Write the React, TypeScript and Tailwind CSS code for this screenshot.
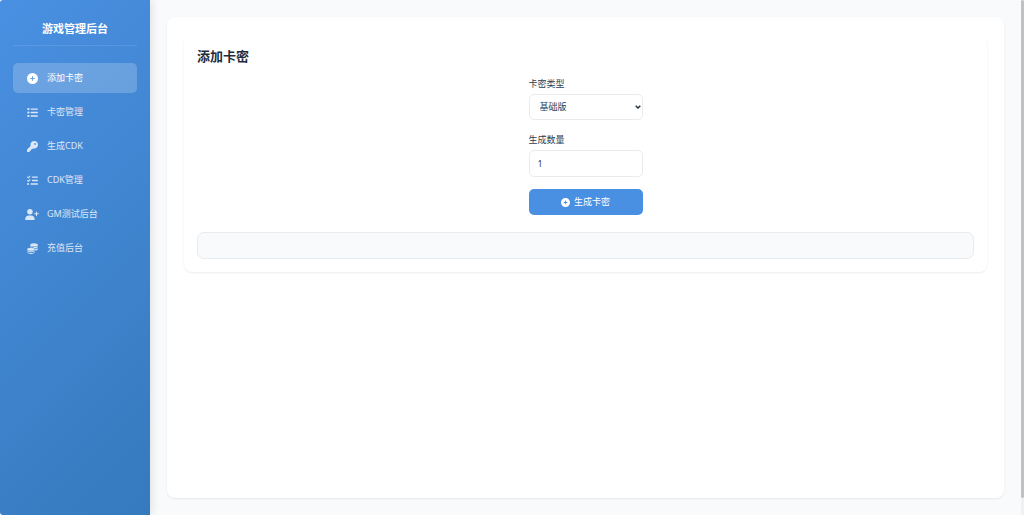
import React, { useState } from 'react';
import { FaCirclePlus, FaKey, FaList, FaListCheck, FaUserPlus } from 'react-icons/fa6';

const CoinsIcon: React.FC<{ className?: string }> = ({ className }) => (
  <svg viewBox="0 0 22 22" className={className} fill="currentColor">
    <ellipse cx="14" cy="3.8" rx="7.6" ry="3.4" />
    <path d="M6.4 6.2 C9 8.8 18.5 9 21.6 5.8 V8.2 C20.8 10 18.4 11 16 11.2 C14.5 8.8 10 8 6.6 8.6 Z" />
    <path d="M16.4 12.4 C18.6 12.2 20.6 11.4 21.6 10.2 V12.4 C21 14 18.8 15 16.4 15.4 Z" />
    <ellipse cx="8" cy="12.3" rx="7.6" ry="3" />
    <path d="M0.4 14.3 C3 17 13 17 15.6 14.3 V16.2 C14 19 2 19 0.4 16.2 Z" />
    <path d="M0.4 17.9 C3 20.4 13 20.4 15.6 17.9 V19.2 C14 22.8 2 22.8 0.4 19.2 Z" />
  </svg>
);

interface MenuItem {
  id: string;
  label: string;
  icon: React.ComponentType<{ className?: string }>;
  wide?: boolean;
}

const menuItems: MenuItem[] = [
  { id: 'add-card', label: '添加卡密', icon: FaCirclePlus },
  { id: 'cards', label: '卡密管理', icon: FaList },
  { id: 'add-cdk', label: '生成CDK', icon: FaKey },
  { id: 'cdks', label: 'CDK管理', icon: FaListCheck },
  { id: 'gm', label: 'GM测试后台', icon: FaUserPlus, wide: true },
  { id: 'recharge', label: '充值后台', icon: CoinsIcon }
];

interface SidebarProps {
  active: string;
  onSelect: (id: string) => void;
}

const Sidebar: React.FC<SidebarProps> = ({ active, onSelect }) => (
  <aside className="relative w-[150px] shrink-0 rounded-l-[3px] bg-linear-135 from-[#4a90e2] to-[#357abd] px-[13px] pt-5 text-white shadow-[2px_0_8px_rgba(0,0,0,0.1)]">
    <h1 className="mb-[17px] border-b border-white/10 pb-2 text-center text-[11px] leading-[17px] font-bold">
      游戏管理后台
    </h1>
    <nav className="flex flex-col gap-1">
      {menuItems.map(({ id, label, icon: Icon, wide }) => (
        <a
          key={id}
          href={`#${id}`}
          onClick={() => onSelect(id)}
          className={`flex h-[30px] items-center gap-2 rounded-[5px] px-3 text-[9px] ${
            active === id ? 'bg-white/20 text-white' : 'text-white/80 hover:bg-white/10'
          }`}
        >
          <span className="flex w-[14px] justify-center">
            <Icon className={wide ? 'h-[11px] w-[14px]' : 'h-[11px] w-[11px]'} />
          </span>
          {label}
        </a>
      ))}
    </nav>
  </aside>
);

const AddCardForm: React.FC = () => {
  const [type, setType] = useState<string>('basic');
  const [count, setCount] = useState<string>('1');

  return (
    <section className="rounded-[8px] bg-white p-[13px] shadow-[0_1px_2px_rgba(0,0,0,0.08)]">
      <h2 className="mb-2.5 text-[13px] leading-[19px] font-bold text-[#1f2d3d]">添加卡密</h2>
      <form
        className="mx-auto flex w-[114px] flex-col gap-3 text-[9px] text-[#2c3e50]"
        onSubmit={(e) => e.preventDefault()}
      >
        <div>
          <label htmlFor="card-type" className="mb-0.5 block leading-[16px]">
            卡密类型
          </label>
          <div className="relative">
            <select
              id="card-type"
              value={type}
              onChange={(e) => setType(e.target.value)}
              className="block h-[26px] w-full appearance-none rounded-[5px] border border-[#e9ecef] bg-white pl-2.5 focus:border-[#4a90e2] focus:outline-none"
            >
              <option value="basic">基础版</option>
              <option value="premium">高级版</option>
            </select>
            <svg
              viewBox="0 0 6 4"
              className="pointer-events-none absolute top-[11px] right-0.5 h-1 w-1.5"
              fill="none"
              stroke="#1f2d3d"
              strokeWidth="1.4"
            >
              <path d="M0.7 0.7 L3 3 L5.3 0.7" />
            </svg>
          </div>
        </div>
        <div>
          <label htmlFor="card-count" className="mb-0.5 block leading-[16px]">
            生成数量
          </label>
          <input
            id="card-count"
            type="number"
            min="1"
            value={count}
            onChange={(e) => setCount(e.target.value)}
            className="block h-[27px] w-full rounded-[5px] border border-[#e9ecef] bg-white px-2 focus:border-[#4a90e2] focus:outline-none"
          />
        </div>
        <button
          type="submit"
          className="flex h-[26px] items-center justify-center gap-1 rounded-[5px] bg-[#4a90e2] text-white hover:bg-[#357abd]"
        >
          <FaCirclePlus className="h-[9px] w-[9px]" />
          生成卡密
        </button>
      </form>
      <div className="mt-[17px] min-h-[27px] rounded-[7px] border border-[#e9ecef] bg-[#f8fafc]" />
    </section>
  );
};

const App: React.FC = () => {
  const [active, setActive] = useState<string>('add-card');

  return (
    <div className="flex min-h-screen bg-white font-['Noto_Sans','Noto_Sans_CJK_SC',sans-serif]">
      <Sidebar active={active} onSelect={setActive} />
      <main className="flex min-w-0 flex-1 flex-col bg-[#f8fafc] p-[17px]">
        <div className="flex-1 rounded-[8px] bg-white p-[17px] shadow-[0_1px_2px_rgba(0,0,0,0.08)]">
          <AddCardForm />
        </div>
      </main>
      <div className="flex w-[3px] shrink-0 flex-col bg-[#f1f1f1] pb-[17px]">
        <div className="flex-1 rounded-[2px] bg-[#c1c1c1]" />
      </div>
    </div>
  );
};

export default App;
